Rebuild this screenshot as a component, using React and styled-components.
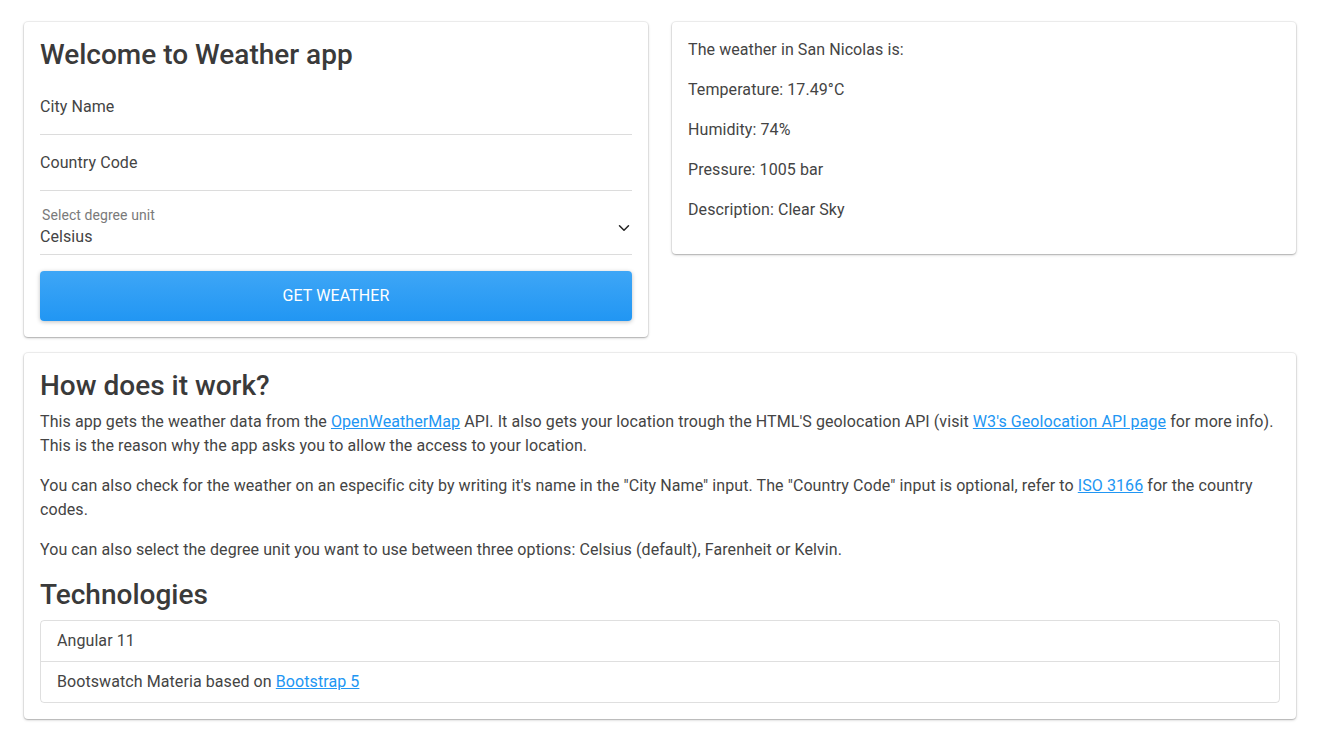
import React from 'react'
import styled, { createGlobalStyle } from 'styled-components'

const GlobalStyle = createGlobalStyle`
    * {
        box-sizing: border-box;
    }

    body {
        margin: 0;
        background: #ffffff;
        font-family: Roboto, 'Noto Sans', sans-serif;
        font-size: 16px;
        line-height: 1.5;
        letter-spacing: 0.08px;
        color: #444444;
    }
`

const Page = styled.div`
    padding: 22px 41px 24px 24px;
`

const TopRow = styled.div`
    display: flex;
    align-items: flex-start;
    gap: 24px;
`

const Card = styled.div`
    flex: ${(p) => (p.$full ? 'none' : '1 1 0')};
    margin-top: ${(p) => (p.$full ? '16px' : '0')};
    padding: 16px;
    background: #ffffff;
    border-radius: 4px;
    box-shadow: 0 0 0 1px rgba(0, 0, 0, 0.05), 0 1px 3px rgba(0, 0, 0, 0.22), 0 1px 1px rgba(0, 0, 0, 0.1);
`

const Heading = styled.h3`
    margin: 0 0 8px;
    font-size: 28px;
    font-weight: 500;
    line-height: 1.2;
    letter-spacing: 0;
    color: #3a3a3a;
`

const Field = styled.div`
    position: relative;
    height: ${(p) => p.$height || '56px'};
    border-bottom: 1px solid #dcdcdc;
`

const Input = styled.input`
    width: 100%;
    height: 100%;
    border: 0;
    padding: 0;
    outline: none;
    background: transparent;
    font-family: inherit;
    font-size: 16px;
    letter-spacing: inherit;
    color: #444444;

    &::placeholder {
        color: #444444;
        opacity: 1;
    }
`

const SelectBox = styled.div`
    display: flex;
    align-items: flex-end;
    justify-content: space-between;
    height: 100%;
    padding-bottom: 5px;
`

const SelectText = styled.div`
    display: flex;
    flex-direction: column;
    gap: 2px;
`

const SelectLabel = styled.span`
    font-size: 14px;
    line-height: 1.3;
    color: #7a7a7a;
    padding-left: 2px;
`

const SelectValue = styled.span`
    font-size: 16px;
    line-height: 1.4;
    color: #444444;
`

const Chevron = styled.svg`
    width: 12px;
    height: 12px;
    margin: 0 2px 15px 0;
`

const Button = styled.button`
    display: block;
    width: 100%;
    height: 50px;
    margin-top: 16px;
    border: 0;
    border-radius: 4px;
    background: linear-gradient(#3ea6f6, #2196f3);
    box-shadow: 0 1px 4px rgba(0, 0, 0, 0.25);
    color: #ffffff;
    font-family: inherit;
    font-size: 16px;
    letter-spacing: inherit;
    text-transform: uppercase;
    cursor: pointer;
`

const Text = styled.p`
    margin: 0 0 16px;
`

const Link = styled.a`
    color: #2196f3;
    text-decoration: underline;
`

const List = styled.ul`
    margin: 0;
    padding: 0;
    list-style: none;
    border: 1px solid rgba(0, 0, 0, 0.125);
    border-radius: 4px;
`

const ListItem = styled.li`
    padding: 8px 16px;

    &:not(:last-child) {
        border-bottom: 1px solid rgba(0, 0, 0, 0.125);
    }
`

const weather = [
  'The weather in San Nicolas is:',
  'Temperature: 17.49°C',
  'Humidity: 74%',
  'Pressure: 1005 bar',
  'Description: Clear Sky',
]

export default function App() {
  return (
    <Page>
      <GlobalStyle />
      <TopRow>
        <Card>
          <Heading>Welcome to Weather app</Heading>
          <Field $height="55px">
            <Input placeholder="City Name" />
          </Field>
          <Field>
            <Input placeholder="Country Code" />
          </Field>
          <Field $height="64px">
            <SelectBox>
              <SelectText>
                <SelectLabel>Select degree unit</SelectLabel>
                <SelectValue>Celsius</SelectValue>
              </SelectText>
              <Chevron viewBox="0 0 16 16" fill="none" stroke="#222" strokeWidth="2" strokeLinecap="round" strokeLinejoin="round">
                <path d="M2 5l6 6 6-6" />
              </Chevron>
            </SelectBox>
          </Field>
          <Button>Get Weather</Button>
        </Card>
        <Card>
          {weather.map((line) => (
            <Text key={line}>{line}</Text>
          ))}
        </Card>
      </TopRow>
      <Card $full>
        <Heading>How does it work?</Heading>
        <Text>
          This app gets the weather data from the <Link href="#">OpenWeatherMap</Link> API. It also gets your
          location trough the HTML'S geolocation API (visit <Link href="#">W3's Geolocation API page</Link> for
          more info). This is the reason why the app asks you to allow the access to your location.
        </Text>
        <Text>
          You can also check for the weather on an especific city by writing it's name in the "City Name" input.
          The "Country Code" input is optional, refer to <Link href="#">ISO 3166</Link> for the country codes.
        </Text>
        <Text>
          You can also select the degree unit you want to use between three options: Celsius (default),
          Farenheit or Kelvin.
        </Text>
        <Heading>Technologies</Heading>
        <List>
          <ListItem>Angular 11</ListItem>
          <ListItem>
            Bootswatch Materia based on <Link href="#">Bootstrap 5</Link>
          </ListItem>
        </List>
      </Card>
    </Page>
  )
}
